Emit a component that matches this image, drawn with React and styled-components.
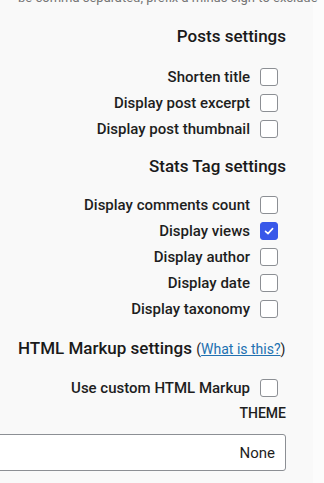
import React, { useState } from "react";
import styled, { createGlobalStyle } from "styled-components";

const GlobalStyle = createGlobalStyle`
  html, body {
    margin: 0;
    padding: 0;
    background: #fcfcfc;
    overflow: hidden;
  }
  body {
    font-family: Roboto, "Liberation Sans", sans-serif;
    color: #1e1e1e;
  }
`;

const Panel = styled.div`
  width: 333px;
  margin-left: -20px;
  height: 483px;
  background: #f9f9f9;
  box-sizing: border-box;
  padding: 0 27px 0 38px;
  display: flex;
  flex-direction: column;
`;

const Hint = styled.p`
  margin: -10px 0 0;
  font-size: 13px;
  line-height: 16px;
  color: #757575;
  text-align: right;
  white-space: nowrap;
`;

const Heading = styled.h3`
  margin: ${props => props.$top}px 0 0;
  font-size: 17px;
  line-height: 22px;
  font-weight: 500;
  color: #1a1a1a;
  text-align: ${props => (props.$left ? "left" : "right")};
`;

const Link = styled.a`
  font-size: 14px;
  font-weight: 400;
  color: #1d2327;

  span {
    color: #2271b1;
    text-decoration: underline;
  }
`;

const List = styled.div`
  display: flex;
  flex-direction: column;
  gap: 8px;
  margin-top: ${props => props.$top}px;
`;

const Row = styled.label`
  display: flex;
  align-items: center;
  justify-content: flex-end;
  gap: 10px;
  padding-right: 8px;
  height: 18px;
  font-size: 15px;
  font-weight: 500;
  color: #1e1e1e;
  cursor: pointer;
`;

const Box = styled.span`
  width: 18px;
  height: 18px;
  box-sizing: border-box;
  border-radius: 3px;
  border: 1px solid ${props => (props.$on ? "#3858e9" : "#8c8f94")};
  background: ${props => (props.$on ? "#3858e9" : "#fff")};
  display: flex;
  align-items: center;
  justify-content: center;
`;

const Caption = styled.div`
  margin-top: 8px;
  font-size: 14px;
  line-height: 16px;
  font-weight: 500;
  text-transform: uppercase;
  text-align: right;
  color: #1e1e1e;
`;

const Select = styled.div`
  margin: 13px 0 0 -30px;
  height: 37px;
  box-sizing: border-box;
  border: 1px solid #8c8f94;
  border-radius: 3px;
  background: #fff;
  display: flex;
  align-items: center;
  justify-content: flex-end;
  padding-right: 10px;
  font-size: 15px;
  color: #1e1e1e;
`;

function Check({ label, initial }) {
  const [on, setOn] = useState(!!initial);
  return (
    <Row onClick={() => setOn(v => !v)}>
      {label}
      <Box $on={on}>
        {on && (
          <svg width="12" height="12" viewBox="0 0 12 12">
            <path d="M2.5 6.3 L5 8.6 L9.6 3.6" fill="none" stroke="#fff" strokeWidth="1.6" strokeLinecap="round" strokeLinejoin="round" />
          </svg>
        )}
      </Box>
    </Row>
  );
}

export default function App() {
  return (
    <>
      <GlobalStyle />
      <Panel>
        <Hint>be comma separated, prefix a minus sign to exclude</Hint>
        <Heading $top={19}>Posts settings</Heading>
        <List $top={21}>
          <Check label="Shorten title" />
          <Check label="Display post excerpt" />
          <Check label="Display post thumbnail" />
        </List>
        <Heading $top={17}>Stats Tag settings</Heading>
        <List $top={19}>
          <Check label="Display comments count" />
          <Check label="Display views" initial />
          <Check label="Display author" />
          <Check label="Display date" />
          <Check label="Display taxonomy" />
        </List>
        <Heading $top={19} $left>
          HTML Markup settings{" "}
          <Link>
            (<span>What is this?</span>)
          </Link>
        </Heading>
        <List $top={19}>
          <Check label="Use custom HTML Markup" />
        </List>
        <Caption>Theme</Caption>
        <Select>None</Select>
      </Panel>
    </>
  );
}
